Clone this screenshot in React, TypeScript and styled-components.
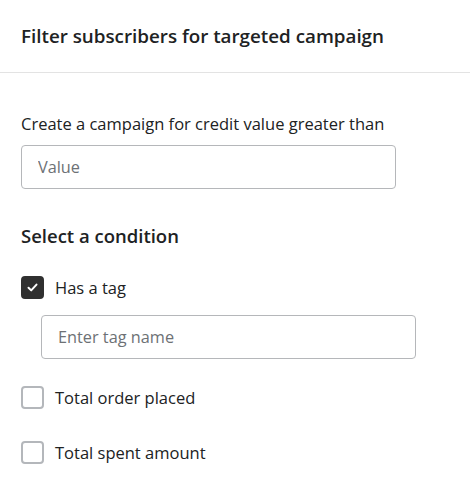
import { createGlobalStyle } from 'styled-components';
import styled from 'styled-components';

const GlobalStyle = createGlobalStyle`
    html, body {
        margin: 0;
        padding: 0;
        background: #ffffff;
    }
    body {
        font-family: "Open Sans", "Noto Sans", sans-serif;
        color: #202223;
    }
`;

const Panel = styled.div`
    width: 470px;
    min-height: 497px;
    background: #fff;
`;

const Header = styled.div`
    height: 73px;
    display: flex;
    align-items: center;
    padding: 0 21px;
    box-sizing: border-box;
    border-bottom: 1px solid #e3e3e3;
`;

const Title = styled.h2`
    margin: 0;
    font-size: 18.8px;
    line-height: 24px;
    font-weight: 600;
    color: #202223;
`;

const Body = styled.div`
    padding: 40px 21px 0;
    display: flex;
    flex-direction: column;
`;

const Label = styled.label`
    font-size: 16.5px;
    line-height: 22px;
    color: #202223;
    margin-bottom: 10px;
`;

const TextInput = styled.input<{ $indent?: boolean }>`
    width: 375px;
    height: 44px;
    box-sizing: border-box;
    margin-left: ${(p) => (p.$indent ? '20px' : '0')};
    padding: 0 16px;
    border: 1px solid #b5b7ba;
    border-radius: 4px;
    font-family: inherit;
    font-size: 16.3px;
    color: #202223;
    outline: none;
    &::placeholder {
        color: #6d7175;
    }
`;

const SectionTitle = styled.h3`
    margin: 36px 0 0;
    font-size: 18.5px;
    line-height: 22px;
    font-weight: 600;
    color: #202223;
`;

const Options = styled.div`
    display: flex;
    flex-direction: column;
    margin-top: 29px;
`;

const OptionRow = styled.label<{ $gap: number }>`
    display: flex;
    align-items: center;
    gap: 11px;
    height: 23px;
    margin-bottom: ${(p) => p.$gap}px;
    font-size: 16.5px;
    line-height: 23px;
    color: #202223;
`;

const Spacer = styled.div<{ $h: number }>`
    height: ${(p) => p.$h}px;
    flex-shrink: 0;
`;

const Box = styled.span<{ $checked: boolean }>`
    width: 23px;
    height: 23px;
    box-sizing: border-box;
    border-radius: 4px;
    border: 2px solid ${(p) => (p.$checked ? '#303030' : '#b4b7bb')};
    background: ${(p) => (p.$checked ? '#303030' : '#fff')};
    display: flex;
    align-items: center;
    justify-content: center;
    flex-shrink: 0;
`;

function Checkbox({ checked }: { checked: boolean }) {
    return (
        <Box $checked={checked}>
            {checked && (
                <svg width="13" height="13" viewBox="0 0 13 13" fill="none">
                    <path d="M2.5 6.8 L5.2 9.4 L10.5 3.6" stroke="#fff" strokeWidth="2" strokeLinecap="round" strokeLinejoin="round" />
                </svg>
            )}
        </Box>
    );
}

export default function App() {
    return (
        <Panel>
            <GlobalStyle />
            <Header>
                <Title>Filter subscribers for targeted campaign</Title>
            </Header>
            <Body>
                <Label>Create a campaign for credit value greater than</Label>
                <TextInput placeholder="Value" />
                <SectionTitle>Select a condition</SectionTitle>
                <Options>
                    <OptionRow $gap={16}>
                        <Checkbox checked />
                        Has a tag
                    </OptionRow>
                    <TextInput $indent placeholder="Enter tag name" />
                    <Spacer $h={27} />
                    <OptionRow $gap={32}>
                        <Checkbox checked={false} />
                        Total order placed
                    </OptionRow>
                    <OptionRow $gap={0}>
                        <Checkbox checked={false} />
                        Total spent amount
                    </OptionRow>
                </Options>
            </Body>
        </Panel>
    );
}
